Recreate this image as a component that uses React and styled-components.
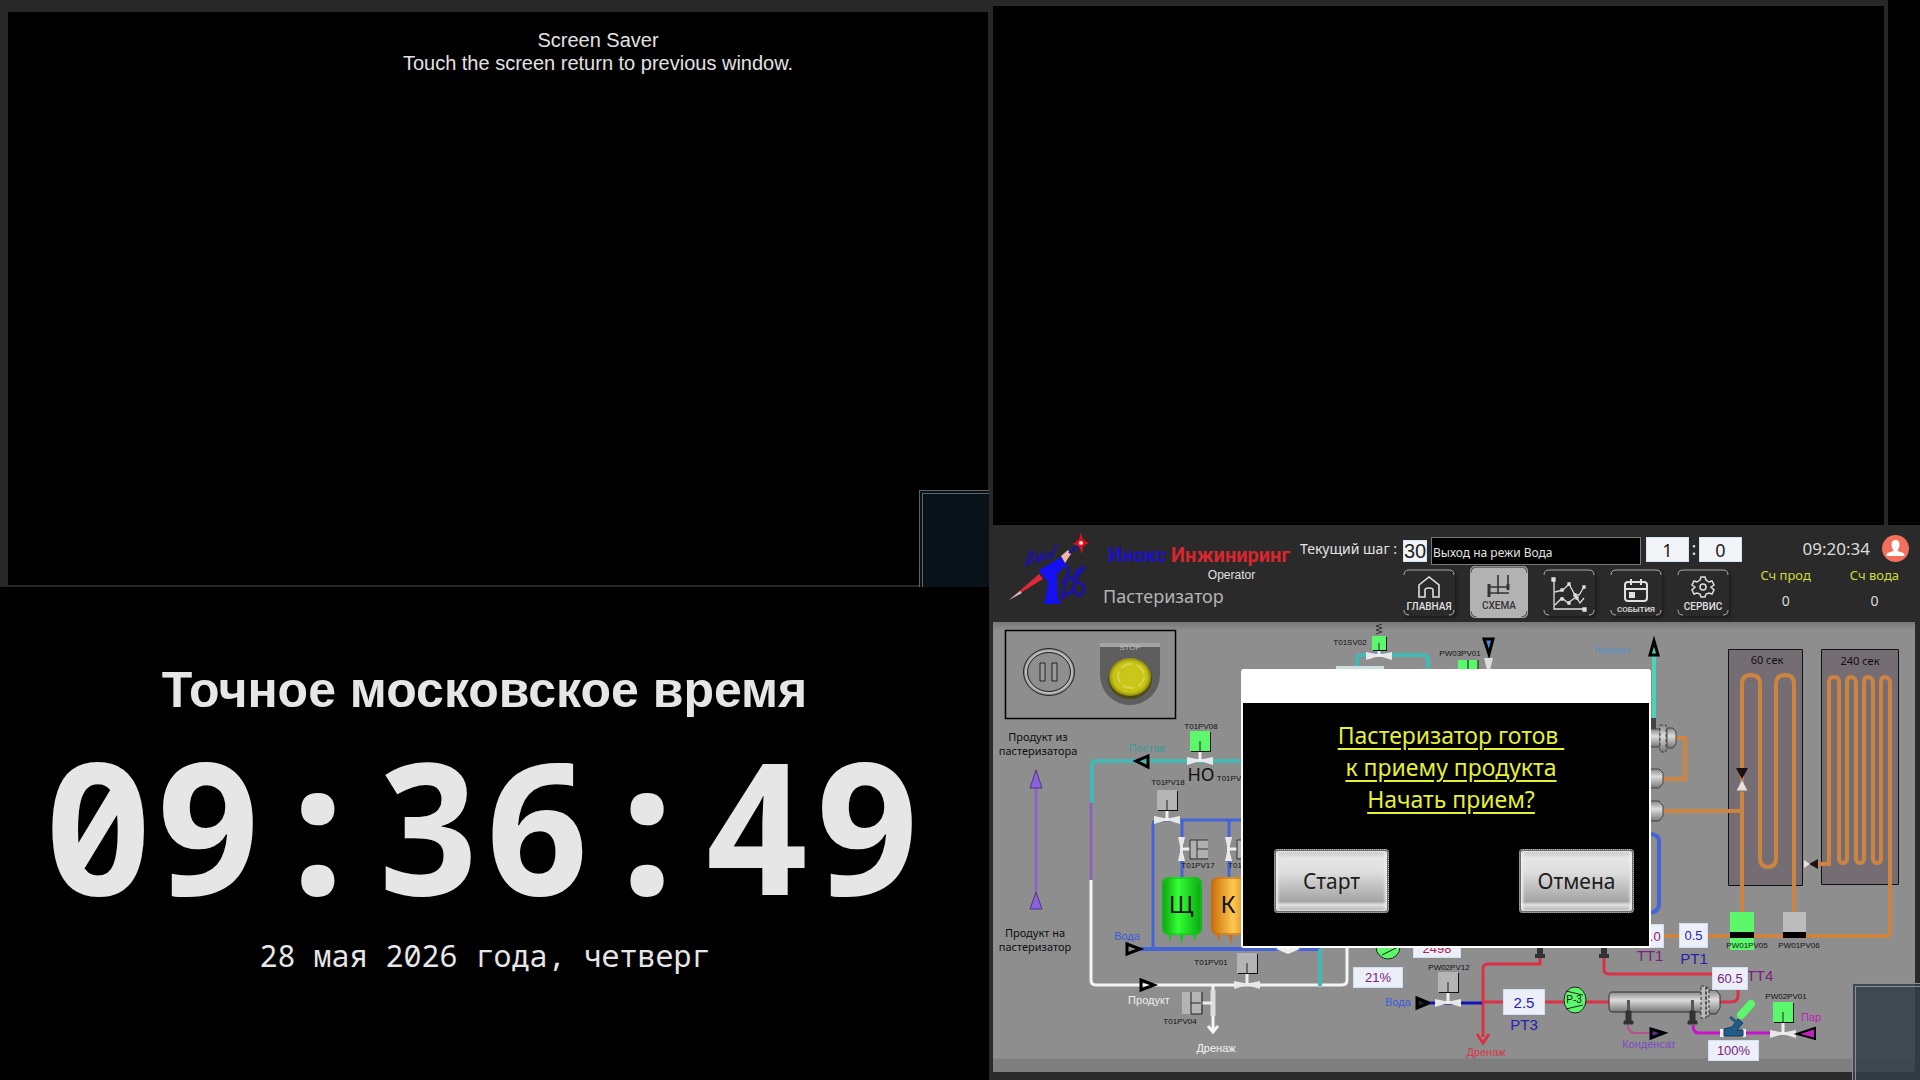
import React from 'react'
import styled, { createGlobalStyle } from 'styled-components'

// the mimic keeps the coordinates of the operator's screen
const OX = 993
const OY = 622

const GlobalStyle = createGlobalStyle`
  * {
    box-sizing: border-box;
  }

  body {
    margin: 0;
    background: #000;
    font-family: "Noto Sans", sans-serif;
  }

  button, input {
    font-family: inherit;
  }
`;

const Wall = styled.div`
  display: grid;
  grid-template-columns: 989fr 931fr;
  min-height: 100vh;
  background: #282828;
`;

const LeftColumn = styled.div`
  display: grid;
  grid-template-rows: 587fr 493fr;
`;

const RightColumn = styled.div`
  display: flex;
  flex-direction: column;
`;

const SaverFrame = styled.section`
  position: relative;
  display: flex;
  padding: 12px 1px 2px 8px;
  background: #282828;
`;

const SaverScreen = styled.div`
  flex: 1;
  padding: 17px 0 0 200px;
  background: #000;
  color: #e2e2e2;
  font: 20px/23px "Liberation Sans", sans-serif;
  text-align: center;

  p {
    margin: 0;
  }
`;

const CornerPanel = styled.div`
  position: absolute;
  right: 0;
  bottom: 0;
  width: ${props => props.$width}px;
  height: 97px;
  background: ${props => props.$fill};
  border: solid ${props => props.$line};
  border-width: 1px 0 0 1px;

  &::before {
    content: "";
    position: absolute;
    inset: 2px 0 0 2px;
    border: solid ${props => props.$line};
    border-width: 1px 0 0 1px;
  }
`;

const Clock = styled.section`
  display: flex;
  flex-direction: column;
  align-items: center;
  padding: 73px 20px 0 0;
  background: #000;
  color: #e6e6e6;
`;

const ClockTitle = styled.h1`
  margin: 0;
  font: bold 50px/60px "Liberation Sans", sans-serif;
`;

const ClockTime = styled.time`
  padding-right: 4px;
  font: bold 183px/208px "Noto Sans Mono", "DejaVu Sans Mono", monospace;
`;

const ClockDate = styled.p`
  margin: 8px 0 0;
  font: 30px/40px "Noto Sans Mono", "DejaVu Sans Mono", monospace;
`;

const EmptyFrame = styled.section`
  flex: 1;
  display: flex;
  padding-left: 4px;
`;

const EmptyScreen = styled.div`
  flex: 1;
  border-top: 6px solid #282828;
  background: #000;
`;

const EmptyStrip = styled.div`
  width: 36px;
  border-left: 4px solid #282828;
  background: #000;
`;

const Hmi = styled.section`
  position: relative;
  padding: 0 5px 8px 4px;
  background: #2a2a2a;
`;

const Header = styled.header`
  display: flex;
  height: 97px;
  padding: 0 6px 0 13px;
`;

const Brand = styled.div`
  width: 206px;
  padding: 16px 0 0 9px;
`;

const BrandName = styled.div`
  padding-left: 5px;
  color: #d8262e;
  font: bold 20px/28px Roboto, sans-serif;
  white-space: nowrap;

  span {
    color: #1c12c4;
  }
`;

const BrandUser = styled.div`
  padding-left: 60px;
  color: #e0e0e0;
  font: 12px/12px "Liberation Sans", sans-serif;
  text-align: center;
`;

const BrandMachine = styled.div`
  color: #b4b4b4;
  font-size: 18px;
  line-height: 30px;
`;

const Controls = styled.div`
  display: grid;
  grid-template-columns: 103px auto;
  grid-template-rows: 40px 52px;
  row-gap: 1px;
`;

const StepLabel = styled.label`
  padding-top: 14px;
  color: #e4e4e4;
  font-size: 14px;
  line-height: 20px;
  white-space: nowrap;
`;

const StepRow = styled.div`
  display: flex;
  align-items: flex-start;
  padding-top: 12px;
  color: #e4e4e4;
`;

const NumberBox = styled.input`
  width: ${props => props.$width}px;
  height: 25px;
  padding: 0;
  border: 1px solid #d4e4f4;
  background: #f2f4f8;
  color: #222;
  font-size: 18px;
  text-align: center;
`;

const StepNumber = styled(NumberBox)`
  height: 22px;
  margin-top: 3px;
  font: 20px "Liberation Sans", sans-serif;
`;

const StepName = styled.input`
  width: 210px;
  height: 28px;
  margin: 0 5px 0 4px;
  padding: 2px 1px 0;
  border: 1px solid #777;
  background: #000;
  color: #e4e4e4;
  font-size: 12px;
`;

const Colon = styled.span`
  width: 10px;
  font-size: 18px;
  line-height: 23px;
  text-align: center;
`;

const Nav = styled.nav`
  grid-column: 2;
  display: flex;
  align-items: center;
  gap: 15px;
`;

const NavButton = styled.button`
  position: relative;
  display: flex;
  flex-direction: column;
  align-items: center;
  justify-content: flex-end;
  gap: ${props => (props.$small ? 1 : 3)}px;
  width: ${props => (props.$active ? 58 : 52)}px;
  height: ${props => (props.$active ? 52 : 47)}px;
  padding: 0 0 ${props => (props.$active ? 7 : props.$small ? 1 : 4)}px;
  border: 0;
  border-radius: 5px;
  background: ${props => (props.$active ? '#b2b2b2' : '#2a2a2a')};
  box-shadow: ${props => (props.$active ? 'none' : '2px 2px 2px #1e1e1e')};
  color: ${props => (props.$active ? '#333' : '#e0e0e0')};
  font: 500 ${props => (props.$small ? 8 : 10)}px/11px Roboto, sans-serif;
`;

const NavCorners = styled.svg`
  position: absolute;
  inset: 0;
  width: 100%;
  height: 100%;
`;

const Totals = styled.div`
  flex: 1;
  padding-top: 9px;
`;

const UserRow = styled.div`
  display: flex;
  justify-content: flex-end;
  align-items: center;
  gap: 12px;
  height: 29px;
  color: #dcdcdc;
  font-size: 17px;
`;

const Counters = styled.dl`
  display: flex;
  justify-content: flex-end;
  gap: 39px;
  margin: 1px 10px 0 0;
  font-size: 13px;
  line-height: 22px;
  text-align: center;

  dt {
    color: #d0dc3c;
  }

  dd {
    margin: 4px 0 0;
    color: #dcdcdc;
    font-size: 14px;
  }
`;

const Mimic = styled.main`
  position: relative;
  height: 450px;
  overflow: hidden;
  background: linear-gradient(#777 0, #8e8e8e 8px, #8e8e8e 436px, #7e7e7e 437px);
`;

const Pipes = styled.svg`
  position: absolute;
  left: 0;
  top: 0;
`;

// text on the mimic, x and y are its centre
const Tag = styled.span`
  position: absolute;
  left: ${props => props.$x - OX}px;
  top: ${props => props.$y - OY}px;
  transform: translate(-50%, -50%);
  color: ${props => props.$color || '#101010'};
  font-family: ${props => (props.$noto ? '"Noto Sans"' : '"Liberation Sans"')}, sans-serif;
  font-size: ${props => props.$size || 8}px;
  line-height: ${props => props.$line || 14}px;
  text-align: center;
  white-space: pre;
`;

const Value = styled.output`
  position: absolute;
  left: ${props => props.$x - OX}px;
  top: ${props => props.$y - OY}px;
  display: flex;
  align-items: center;
  justify-content: center;
  width: ${props => props.$w}px;
  height: ${props => props.$h}px;
  border: 1px solid #cfe0f0;
  background: #eceff8;
  color: ${props => props.$color || '#7a1c7e'};
  font: ${props => props.$size || 13}px "Liberation Sans", sans-serif;
`;

const Dialog = styled.div`
  position: absolute;
  left: 248px;
  top: 47px;
  width: 410px;
  padding: 34px 2px 2px;
  border-radius: 3px;
  background: #fff;
`;

const DialogBody = styled.div`
  padding: 16px 15px 33px 31px;
  background: #000;
`;

const DialogText = styled.p`
  margin: 0 0 34px;
  padding-right: 6px;
  color: #e4f034;
  font-size: 23px;
  line-height: 32px;
  text-align: center;
  text-decoration: underline;
  text-underline-offset: 4px;
  white-space: pre;
`;

const DialogButtons = styled.div`
  display: flex;
  justify-content: space-between;
`;

const DialogButton = styled.button`
  width: 115px;
  height: 64px;
  padding: 0;
  border: 2px solid #6c6c6c;
  border-radius: 4px;
  outline: 1px dotted #bbb;
  outline-offset: -1px;
  background: linear-gradient(#c4c4c4, #e6e6e6 12%, #dedede 35%, #a4a4a4 84%, #e2e2e2 90%, #a8a8a8);
  box-shadow: inset 2px 0 3px #f0f0f0, inset -2px 0 3px #f0f0f0;
  color: #1c1c1c;
  font-size: 21px;
`;

const GREEN = '#5cf86c'
const GREY = '#b4b4b4'
const BLUE = '#4464d8'
const TEAL = '#44b8b4'
const ORANGE = '#cc8440'
const RED = '#dc3044'

const Logo = () => (
  <svg width="88" height="97" viewBox="1005 525 88 97" fill="none" aria-hidden="true">
    <path d="M1025 566q5-18 7-14q0 8-6 14M1033 563l4-8l1 7l4-9l1 7q3-1 5-7l2 5l6-14" stroke="#1c12a4" strokeWidth="2" />
    <path d="M1008 600l30-26l4 5z" fill="#e02838" />
    <path d="M1008 600l11-9l2 2z" fill="#c8c0c0" />
    <path d="M1038 570l22-13l6 8l-10 9l1 24l3 6h-17l2-8l2-15l-4-3z" fill="#1410f0" />
    <path d="M1060 556l7-6l3 4l-6 9z" fill="#f0b4a8" />
    <path d="M1068 553l10-8" stroke="#1410c0" strokeWidth="2" />
    <path d="M1068 566l-7 34M1061 583q10-10 13 0q-2 12-14 13M1084 567q-14 4-9 14q11 4 7 12q-6 6-9-3q0-16 10-20" stroke="#1c12a4" strokeWidth="3" />
    <path d="M1080 532l2 8l6 3l-6 3l-1 8l-3-8l-6-2l6-4z" fill="#e01018" />
    <circle cx="1080" cy="543" r="4" fill="#e01018" />
    <circle cx="1080" cy="543" r="2" fill="#ffd8d8" />
  </svg>
)

const Corners = () => (
  <NavCorners viewBox="0 0 52 47" preserveAspectRatio="none" fill="none" stroke="currentColor" strokeOpacity=".7" aria-hidden="true">
    <path d="M1 6q0-5 5-5H46q5 0 5 5M1 41q0 5 5 5M51 41q0 5-5 5" />
  </NavCorners>
)

const icons = {
  home: (
    <svg width="24" height="22" viewBox="0 0 24 22" fill="none" stroke="currentColor" strokeWidth="1.6">
      <path d="M2 9L12 1l10 8v12h-6v-7q0-2-4-2t-4 2v7H2z" />
    </svg>
  ),
  scheme: (
    <svg width="24" height="22" viewBox="0 0 24 22" fill="none" stroke="currentColor" strokeWidth="1.6">
      <path d="M11 0v19M21 0v12M1 12h21M1 18h21" />
      <path d="M2 9v13M21 9v6" strokeWidth="3" />
    </svg>
  ),
  trend: (
    <svg width="38" height="36" viewBox="0 0 38 36" fill="none" stroke="currentColor" strokeWidth="1.3">
      <path d="M4 3v30h30M5 16l8-2l6-6l6 11l4 0l5-8M5 29l7-7l6 5l8-6l4 6l4-5" />
      <path d="M2 2h3v3H2zM11 13h2v2h-2zM18 7h2v2h-2zM24 18h2v2h-2zM33 10h2v2h-2zM11 22h2v2h-2zM18 26h2v2h-2zM26 21h2v2h-2zM33 32h3v3h-3z" fill="currentColor" />
    </svg>
  ),
  events: (
    <svg width="26" height="24" viewBox="0 0 26 24" fill="none" stroke="currentColor" strokeWidth="2">
      <rect x="2" y="3" width="22" height="19" rx="3" />
      <path d="M2 10h22M8 0v6M18 0v6" />
      <path d="M7 14h4v4H7z" fill="currentColor" />
    </svg>
  ),
  service: (
    <svg width="24" height="22" viewBox="0 0 24 22" fill="none" stroke="currentColor" strokeWidth="1.5">
      <path d="M10 1h4l1 3l3 2l3-1l2 4l-3 2l3 3l-2 4l-3-1l-3 1l-1 3h-4l-1-3l-3-1l-3 1l-2-4l3-3l-3-2l2-4l3 1l3-2z" />
      <circle cx="12" cy="11" r="3" />
    </svg>
  )
}

const Valve = ({ x, y, color = GREY, size = 20, stem = 10 }) => (
  <g>
    <path d={`M${x - 13} ${y - 4}l10 2h6l10-2v8l-10-3h-6l-10 3z`} fill="#e8e8e8" />
    <path d={`M${x} ${y}v${-stem - 2}`} stroke="#eee" strokeWidth="3" />
    <rect x={x - size / 2 + 1} y={y - stem - size + 1} width={size} height={size} fill="#111" />
    <rect x={x - size / 2} y={y - stem - size} width={size} height={size} fill={color} />
    <path d={`M${x} ${y - stem - size / 2}v${size / 2}`} stroke="#222" />
  </g>
)

const SideValve = ({ x, y }) => (
  <g>
    <path d={`M${x - 3} ${y - 12}h7l-2 9v6l2 9h-7l2-9v-6z`} fill="#e8e8e8" />
    <path d={`M${x} ${y}h9`} stroke="#eee" strokeWidth="3" />
    <rect x={x + 9} y={y - 9} width="18" height="18" fill="#b0b0b0" />
    <path d={`M${x + 27} ${y - 9}h-18v19h18M${x + 16} ${y - 9}v18M${x + 16} ${y}h11`} stroke="#333" fill="none" />
  </g>
)

const Tank = ({ x, fill, leg }) => (
  <g>
    <path d={`M${x + 5} 930h5l-2 12zM${x + 17} 932h5l-2 12zM${x + 30} 930h5l-2 12z`} fill={leg} />
    <rect x={x} y="877" width="40" height="58" rx="7" fill={`url(#${fill})`} />
    <rect x={x + 1} y="878" width="38" height="56" rx="7" fill="none" stroke={leg} strokeOpacity=".6" strokeWidth="2" />
  </g>
)

const Exchanger = () => (
  <g stroke="#333">
    <path d="M1612 992h90v20h-90q-3 0-3-5v-10q0-5 3-5z" fill="url(#steel)" />
    <path d="M1708 990h8l4 5v13l-4 6h-8z" fill="url(#steel)" />
    <path d="M1701 986h5v32h-5zM1706 988h3v28h-3z" fill="#bbb" strokeDasharray="3 2" />
    <path d="M1627 1000h3v20h-3zM1691 1000h3v20h-3z" fill="#555" stroke="none" />
    <path d="M1626 1011h5v10h2v3h-9v-3h2zM1690 1011h5v10h2v3h-9v-3h2z" fill="#333" />
  </g>
)

const PipeDrawing = () => (
  <Pipes width="922" height="450" viewBox={`${OX} ${OY} 922 450`} fill="none" aria-hidden="true">
    <defs>
      <linearGradient id="greenTank">
        <stop offset="0" stopColor="#0a9c10" />
        <stop offset=".4" stopColor="#34ff34" />
        <stop offset="1" stopColor="#08a810" />
      </linearGradient>
      <linearGradient id="orangeTank">
        <stop offset="0" stopColor="#c86c08" />
        <stop offset=".55" stopColor="#ffc850" />
        <stop offset="1" stopColor="#c87010" />
      </linearGradient>
      <linearGradient id="steel" x2="0" y2="1">
        <stop offset="0" stopColor="#888" />
        <stop offset=".4" stopColor="#ddd" />
        <stop offset="1" stopColor="#777" />
      </linearGradient>
      <radialGradient id="knob">
        <stop offset="0" stopColor="#ccc81c" />
        <stop offset=".8" stopColor="#c8c414" />
        <stop offset="1" stopColor="#8c8a10" />
      </radialGradient>
    </defs>

    {/* stop and pause block */}
    <rect x="1005.5" y="630.5" width="170" height="88" stroke="#000" strokeWidth="1.5" />
    <ellipse cx="1049" cy="672" rx="25.500" ry="23.500" stroke="#222" />
    <ellipse cx="1049" cy="672" rx="23" ry="21" stroke="#bbb" strokeWidth="2" />
    <ellipse cx="1049" cy="672" rx="21.500" ry="19.500" stroke="#222" />
    <path d="M1040 663h5v18h-5zM1052 663h5v18h-5z" stroke="#222" fill="#9a9a9a" />
    <path d="M1100 643h60v32a30 30 0 0 1-60 0z" fill="#5e5e5e" />
    <path d="M1100 643h60v4h-60z" fill="#a4a4a4" />
    <ellipse cx="1130" cy="679" rx="22" ry="20" fill="#4c4c18" />
    <ellipse cx="1130" cy="677" rx="21" ry="19" fill="url(#knob)" />
    <ellipse cx="1131" cy="676" rx="13" ry="12" stroke="#d8d450" strokeWidth="2" strokeDasharray="12 4" />

    {/* product in and out */}
    <path d="M1036 788v104" stroke="#8c64c8" strokeWidth="3" />
    <path d="M1036 770l6 18h-12zM1036 892l6 17h-12z" fill="#8c60e0" stroke="#4a3a78" />
    <path d="M1091 800v82" stroke="#8c64b8" strokeWidth="3" />
    <path d="M1242 761H1096q-4 0-4 4v38" stroke={TEAL} strokeWidth="4" />
    <path d="M1091 880v100q0 5 5 5H1342q5 0 5-5v-36" stroke="#f4f4f4" strokeWidth="3" />
    <path d="M1148 756v11l-12-6z" stroke="#000" strokeWidth="3" />

    {/* water and wash tanks */}
    <path d="M1153 949V825q0-5 5-5h86M1182 820v60M1229 820v60" stroke={BLUE} strokeWidth="3" />
    <path d="M1140 949H1320" stroke={BLUE} strokeWidth="4" />
    <path d="M1320 949v37" stroke={TEAL} strokeWidth="4" />
    <path d="M1276 949l12-5v10zM1300 949l-12-5v10z" fill="#eee" />
    <path d="M1127 944v10l13-5zM1141 980v10l13-5z" stroke="#000" strokeWidth="3" />
    <path d="M1213 985v48M1208 1026l5 6l5-6" stroke="#f4f4f4" strokeWidth="3" />
    <path d="M1213 990v26" stroke="#ddd" strokeWidth="5" />
    <path d="M1201 1003h11" stroke="#eee" strokeWidth="3" />
    <path d="M1182 992h19v22h-19z" fill={GREY} />
    <path d="M1191 992v22M1191 1003h10M1202 992v22h-11" stroke="#222" />
    <Valve x={1200} y={761} color={GREEN} />
    <Valve x={1167} y={820} />
    <Valve x={1247} y={985} stem={12} />
    <SideValve x={1181} y={849} />
    <SideValve x={1228} y={849} />
    <Tank x={1162} fill="greenTank" leg="#10c818" />
    <Tank x={1211} fill="orangeTank" leg="#c86c10" />

    {/* steam relief above the pasteurizer */}
    <path d="M1357 670v-10q0-5 5-5h61q5 0 5 5v10" stroke={TEAL} strokeWidth="4" />
    <path d="M1376 634l6-2l-6-2l6-2l-6-2l6-2" stroke="#333" />
    <Valve x={1379} y={656} color={GREEN} size={14} stem={6} />
    <path d="M1336 666h48v4h-48z" fill="#d0dce4" />
    <path d="M1458 660h20v10h-20z" fill={GREEN} />
    <path d="M1468 660v10M1478 660v10" stroke="#111" />
    <path d="M1484 639h9l-4 15z" fill="#4888d0" stroke="#000" strokeWidth="3" />
    <path d="M1484 658h9l-3 12h-3z" fill="#ddd" />
    <path d="M1654 655v64" stroke="#48d4b8" strokeWidth="4" />
    <path d="M1654 641l4 14h-8z" fill="#48d4b8" stroke="#000" strokeWidth="3" />
    <path d="M1650 718h6v20h-6z" fill="#444" />

    {/* holding coils */}
    <path d="M1728.500 649.500h74v236h-74zM1821.500 649.500h77v235h-77z" fill="#756d74" stroke="#111" />
    <g stroke={ORANGE} strokeWidth="4">
      <path d="M1676 738h9v41h-22M1664 811h78M1742 912V684q0-9 9-9t9 9V858q0 9 8 9t8-9V684q0-9 9-9t9 9V912" />
      <path d="M1818 864h11V682q0-5 5-5t5 5V858q0 5 4 5t4-5V682q0-5 4-5t5 5V858q0 5 4 5t4-5V682q0-5 4-5t5 5V858q0 5 4 5t4-5V682q0-5 4-5t5 5V932q0 4-4 4H1663" />
    </g>
    <path d="M1736 768h12l-6 11z" fill="#1c1010" />
    <path d="M1736 791h12l-6-12z" fill="#e8e0dc" stroke="#777" />
    <path d="M1818 859v10l-9-5z" fill="#1c1010" />
    <path d="M1804 860v8l6-4z" fill="#e8e0dc" />
    <g stroke="#444" fill="url(#steel)">
      <path d="M1650 729h10v18h-10z" />
      <path d="M1667 728h6l3 4v12l-3 4h-6z" />
      <path d="M1650 769h9l4 4v10l-4 5h-9z" />
      <path d="M1650 801h9l4 5v10l-4 5h-9z" />
      <path d="M1660 725h6v27h-6z" strokeDasharray="3 2" />
    </g>
    <path d="M1648 834q11 0 11 7v63q0 8-10 9" stroke={BLUE} strokeWidth="4" />
    <path d="M1730 912h24v38h-24z" fill={GREEN} />
    <path d="M1783 912h23v20h-23z" fill="#bcbcbc" />
    <path d="M1730 932h24v6h-24zM1783 932h23v6h-23z" fill="#000" />

    {/* heating circuit */}
    <g stroke={RED} strokeWidth="3">
      <path d="M1540 955v9h-52q-5 0-5 5v68M1477 1034l6 9l6-9M1483 1002h126M1604 955v14q0 5 5 5h103M1738 990v6q0 6-8 6h-10" />
    </g>
    <path d="M1537 946h6v8h2v4h-10v-4h2zM1601 946h6v8h2v4h-10v-4h2z" fill="#333" />
    <ellipse cx="1388" cy="947" rx="12" ry="12" fill={GREEN} stroke="#222" />
    <path d="M1382 955l16-8" stroke="#222" />
    <path d="M1417 998v10l12-5z" stroke="#000" strokeWidth="3" fill="#222" />
    <path d="M1430 1003h52" stroke="#1414b8" strokeWidth="3" />
    <Valve x={1448} y={1003} stem={11} />
    <ellipse cx="1575" cy="1000" rx="11" ry="13" fill={GREEN} stroke="#222" />
    <path d="M1566 991l17 4M1566 1009l17-4" stroke="#222" />
    <Exchanger />
    <path d="M1628 1025q0 8 7 8h15" stroke="#b85090" strokeWidth="2" />
    <path d="M1651 1029v9l13-5z" fill="#5a30a0" stroke="#000" strokeWidth="3" />
    <path d="M1693 1025q0 8 6 8h73" stroke="#c814c8" strokeWidth="3" />
    <Valve x={1783} y={1034} color={GREEN} stem={12} />
    <path d="M1815 1028v11l-18-5z" fill="#c020c0" stroke="#000" strokeWidth="2" />
    <path d="M1720 1029h4v8h-4zM1742 1029h4v8h-4z" fill="#eee" />
    <path d="M1724 1029l8-2l6-8l5 4l-6 7l6 0v6h-19z" fill="#205c88" stroke="#143c5c" />
    <path d="M1730 1017l10 8" stroke="#205c88" strokeWidth="3" />
    <path d="M1741 1015l10-11" stroke={GREEN} strokeWidth="8" strokeLinecap="round" />
  </Pipes>
)

const tags = [
  { text: 'Продукт из\nпастеризатора', x: 1038, y: 744, size: 11, noto: true },
  { text: 'Продукт на\nпастеризатор', x: 1035, y: 940, size: 11, noto: true },
  { text: 'STOP', x: 1130, y: 648, size: 8, color: '#bbb' },
  { text: 'Постав', x: 1147, y: 748, size: 11, color: '#3c9c9c' },
  { text: 'T01PV08', x: 1201, y: 727 },
  { text: 'НО', x: 1201, y: 774, size: 18, noto: true },
  { text: 'T01PV', x: 1229, y: 779 },
  { text: 'T01PV18', x: 1168, y: 783 },
  { text: 'T01PV17', x: 1198, y: 866 },
  { text: 'T01', x: 1235, y: 866 },
  { text: 'Щ', x: 1181, y: 904, size: 24, noto: true },
  { text: 'К', x: 1228, y: 904, size: 24, noto: true },
  { text: 'Вода', x: 1127, y: 936, size: 11, color: '#3c5cd8' },
  { text: 'T01PV01', x: 1211, y: 963 },
  { text: 'Продукт', x: 1149, y: 1000, size: 11, color: '#eee' },
  { text: 'T01PV04', x: 1180, y: 1022 },
  { text: 'Дренаж', x: 1216, y: 1048, size: 11, color: '#f4f4f4' },
  { text: 'T01SV02', x: 1350, y: 643 },
  { text: 'PW03PV01', x: 1460, y: 654 },
  { text: 'Ледяная', x: 1612, y: 650, size: 9, color: '#5494cc' },
  { text: '60 сек', x: 1767, y: 660, size: 11, noto: true },
  { text: '240 сек', x: 1860, y: 661, size: 11, noto: true },
  { text: 'TT1', x: 1650, y: 956, size: 15, color: '#7c2080' },
  { text: 'PT1', x: 1694, y: 959, size: 15, color: '#2420b0' },
  { text: 'TT4', x: 1760, y: 976, size: 15, color: '#7c2080' },
  { text: 'PT3', x: 1524, y: 1025, size: 15, color: '#2420b0' },
  { text: 'PW01PV05', x: 1747, y: 946 },
  { text: 'PW01PV06', x: 1799, y: 946 },
  { text: 'PW02PV12', x: 1449, y: 968 },
  { text: 'PW02PV01', x: 1786, y: 997 },
  { text: 'Вода', x: 1398, y: 1002, size: 11, color: '#3c5cd8' },
  { text: 'P-3', x: 1574, y: 1000, size: 10 },
  { text: 'Дренаж', x: 1486, y: 1052, size: 11, color: '#d83848' },
  { text: 'Конденсат', x: 1649, y: 1044, size: 11, color: '#8048c8' },
  { text: 'Пар', x: 1811, y: 1017, size: 11, color: '#c020c0' }
]

const values = [
  { text: '21%', x: 1353, y: 967, w: 50, h: 21 },
  { text: '2498', x: 1413, y: 938, w: 48, h: 20, color: '#b02050' },
  { text: '2.5', x: 1503, y: 989, w: 42, h: 26, color: '#2420b0', size: 15 },
  { text: '45.0', x: 1632, y: 924, w: 32, h: 24, color: '#8c2070' },
  { text: '0.5', x: 1679, y: 923, w: 29, h: 25, color: '#2420b0' },
  { text: '60.5', x: 1712, y: 967, w: 36, h: 23 },
  { text: '100%', x: 1708, y: 1040, w: 51, h: 21 }
]

class App extends React.Component {

  state = {
    page: "scheme",
    dialogOpen: true
  };

  openPage = (page) => {
    this.setState({ page: page });
  };

  closeDialog = () => {
    this.setState({ dialogOpen: false });
  };

  renderNavButton = (name, title) => {
    return (
      <NavButton
        type="button"
        aria-label={title || "ГРАФИКИ"}
        $active={this.state.page === name}
        $small={name === "events"}
        onClick={() => this.openPage(name)}
      >
        <Corners />
        {icons[name]}
        {title}
      </NavButton>
    )
  };

  render () {
    return (
      <Wall>
        <GlobalStyle />
        <LeftColumn>
          <SaverFrame>
            <SaverScreen>
              <p>Screen Saver</p>
              <p>Touch the screen return to previous window.</p>
            </SaverScreen>
            <CornerPanel $width={70} $fill="#0a1219" $line="#5c6468" />
          </SaverFrame>
          <Clock>
            <ClockTitle>Точное московское время</ClockTitle>
            <ClockTime>09:36:49</ClockTime>
            <ClockDate>28 мая 2026 года, четверг</ClockDate>
          </Clock>
        </LeftColumn>

        <RightColumn>
          <EmptyFrame>
            <EmptyScreen />
            <EmptyStrip />
          </EmptyFrame>

          <Hmi>
            <Header>
              <Logo />
              <Brand>
                <BrandName><span>Инокс</span> Инжиниринг</BrandName>
                <BrandUser>Operator</BrandUser>
                <BrandMachine>Пастеризатор</BrandMachine>
              </Brand>
              <Controls>
                <StepLabel htmlFor="step">Текущий шаг :</StepLabel>
                <StepRow>
                  <StepNumber id="step" $width={24} value="30" readOnly />
                  <StepName aria-label="Название шага" value="Выход на режи Вода" readOnly />
                  <NumberBox aria-label="Минуты" $width={43} value="1" readOnly />
                  <Colon>:</Colon>
                  <NumberBox aria-label="Секунды" $width={43} value="0" readOnly />
                </StepRow>
                <Nav>
                  {this.renderNavButton("home", "ГЛАВНАЯ")}
                  {this.renderNavButton("scheme", "СХЕМА")}
                  {this.renderNavButton("trend")}
                  {this.renderNavButton("events", "СОБЫТИЯ")}
                  {this.renderNavButton("service", "СЕРВИС")}
                </Nav>
              </Controls>
              <Totals>
                <UserRow>
                  <time>09:20:34</time>
                  <svg width="27" height="27" viewBox="0 0 27 27" aria-hidden="true">
                    <circle cx="13.500" cy="13.500" r="13.500" fill="#f0705c" />
                    <path d="M13.500 5q4 0 4 5q0 3-2 5v1l6 2q1 1 1 3h-18q0-2 1-3l6-2v-1q-2-2-2-5q0-5 4-5z" fill="#fff" />
                  </svg>
                </UserRow>
                <Counters>
                  <div>
                    <dt>Сч прод</dt>
                    <dd>0</dd>
                  </div>
                  <div>
                    <dt>Сч вода</dt>
                    <dd>0</dd>
                  </div>
                </Counters>
              </Totals>
            </Header>

            <Mimic>
              <PipeDrawing />
              {tags.map((tag, i) => (
                <Tag key={i} $x={tag.x} $y={tag.y} $size={tag.size} $color={tag.color} $noto={tag.noto}>
                  {tag.text}
                </Tag>
              ))}
              {values.map((item, i) => (
                <Value key={i} $x={item.x} $y={item.y} $w={item.w} $h={item.h} $color={item.color} $size={item.size}>
                  {item.text}
                </Value>
              ))}
              {this.state.dialogOpen && (
                <Dialog role="dialog" aria-label="Пастеризатор">
                  <DialogBody>
                    <DialogText>{"Пастеризатор готов \nк приему продукта\nНачать прием?"}</DialogText>
                    <DialogButtons>
                      <DialogButton type="button" onClick={this.closeDialog}>Старт</DialogButton>
                      <DialogButton type="button" onClick={this.closeDialog}>Отмена</DialogButton>
                    </DialogButtons>
                  </DialogBody>
                </Dialog>
              )}
            </Mimic>
            <CornerPanel $width={68} $fill="rgba(50, 62, 72, 0.86)" $line="#8c9094" />
          </Hmi>
        </RightColumn>
      </Wall>
    )}
}

export default App
